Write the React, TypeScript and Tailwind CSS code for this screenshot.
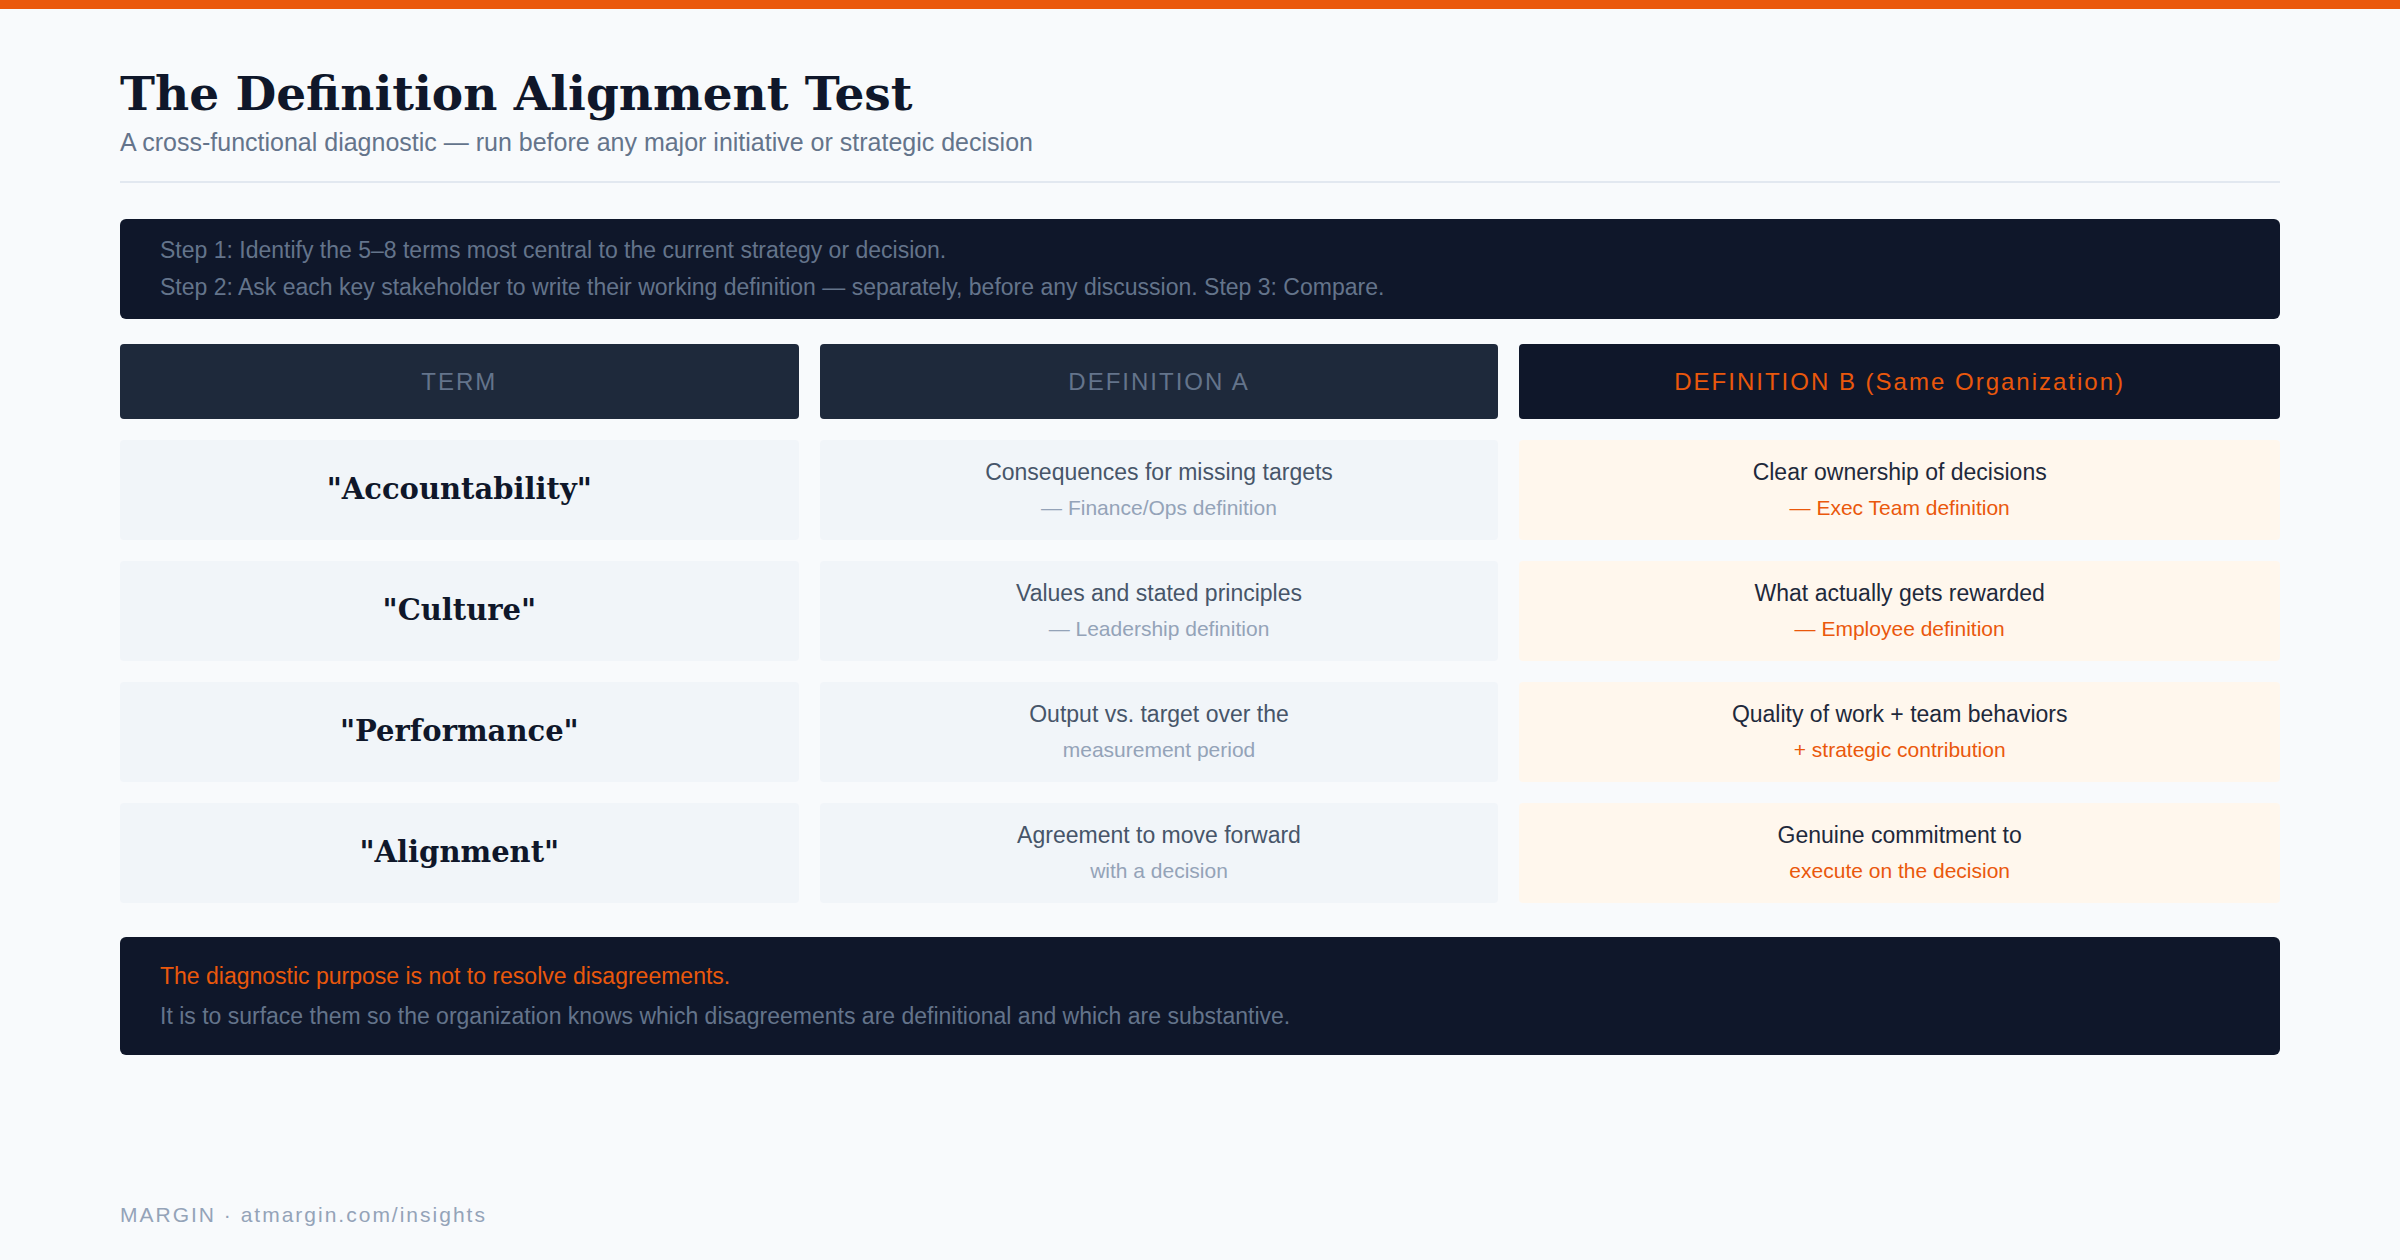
export default function App() {
  const serif = { fontFamily: '"DejaVu Serif", serif' };
  const rows = [
    ['"Accountability"', 'Consequences for missing targets', '— Finance/Ops definition', 'Clear ownership of decisions', '— Exec Team definition'],
    ['"Culture"', 'Values and stated principles', '— Leadership definition', 'What actually gets rewarded', '— Employee definition'],
    ['"Performance"', 'Output vs. target over the', 'measurement period', 'Quality of work + team behaviors', '+ strategic contribution'],
    ['"Alignment"', 'Agreement to move forward', 'with a decision', 'Genuine commitment to', 'execute on the decision'],
  ];
  return (
    <div className="min-h-[1260px] w-[2400px] bg-[#f8fafc] flex flex-col" style={{ fontFamily: '"Liberation Sans", Arial, sans-serif' }}>
      <div className="h-[9px] bg-[#ea580c]" />
      <div className="px-[120px] pt-[58px] flex flex-col flex-1">
        <h1 className="text-[47px] font-bold text-[#0f172a] leading-[54px]" style={serif}>The Definition Alignment Test</h1>
        <p className="text-[25px] text-[#64748b] mt-[4px] leading-[34px]">A cross-functional diagnostic — run before any major initiative or strategic decision</p>
        <div className="h-[2px] bg-[#e2e8f0] mt-[22px]" />
        <div className="mt-[36px] bg-[#0f172a] rounded-[6px] px-[40px] py-[13px] text-[23px] leading-[37px] text-[#64748b]">
          <div>Step 1: Identify the 5–8 terms most central to the current strategy or decision.</div>
          <div>Step 2: Ask each key stakeholder to write their working definition — separately, before any discussion. Step 3: Compare.</div>
        </div>
        <div className="mt-[25px] grid grid-cols-[679fr_679fr_761fr] gap-x-[21px] gap-y-[21px]">
          <div className="h-[75px] bg-[#1e293b] rounded-[4px] flex items-center justify-center text-[24px] tracking-[2px] text-[#64748b]">TERM</div>
          <div className="h-[75px] bg-[#1e293b] rounded-[4px] flex items-center justify-center text-[24px] tracking-[2px] text-[#64748b]">DEFINITION A</div>
          <div className="h-[75px] bg-[#0f172a] rounded-[4px] flex items-center justify-center text-[24px] tracking-[2px] text-[#ea580c]">DEFINITION B (Same Organization)</div>
          {rows.map((r) => (
            <>
              <div key={r[0] + 'a'} className="h-[100px] bg-[#f1f5f9] rounded-[4px] flex items-center justify-center text-[29px] font-bold text-[#0f172a]" style={serif}>{r[0]}</div>
              <div key={r[0] + 'b'} className="h-[100px] bg-[#f1f5f9] rounded-[4px] flex flex-col items-center justify-center leading-[36px]">
                <div className="text-[23px] text-[#475569]">{r[1]}</div>
                <div className="text-[21px] text-[#94a3b8]">{r[2]}</div>
              </div>
              <div key={r[0] + 'c'} className="h-[100px] bg-[#fff7ed] rounded-[4px] flex flex-col items-center justify-center leading-[36px]">
                <div className="text-[23px] text-[#1e293b]">{r[3]}</div>
                <div className="text-[21px] text-[#ea580c]">{r[4]}</div>
              </div>
            </>
          ))}
        </div>
        <div className="mt-[34px] bg-[#0f172a] rounded-[6px] px-[40px] py-[19px] text-[23px] leading-[40px]">
          <div className="text-[#ea580c]">The diagnostic purpose is not to resolve disagreements.</div>
          <div className="text-[#64748b]">It is to surface them so the organization knows which disagreements are definitional and which are substantive.</div>
        </div>
        <div className="mt-auto mb-[30px] text-[21px] tracking-[2px] text-[#94a3b8]">MARGIN · atmargin.com/insights</div>
      </div>
    </div>
  );
}
